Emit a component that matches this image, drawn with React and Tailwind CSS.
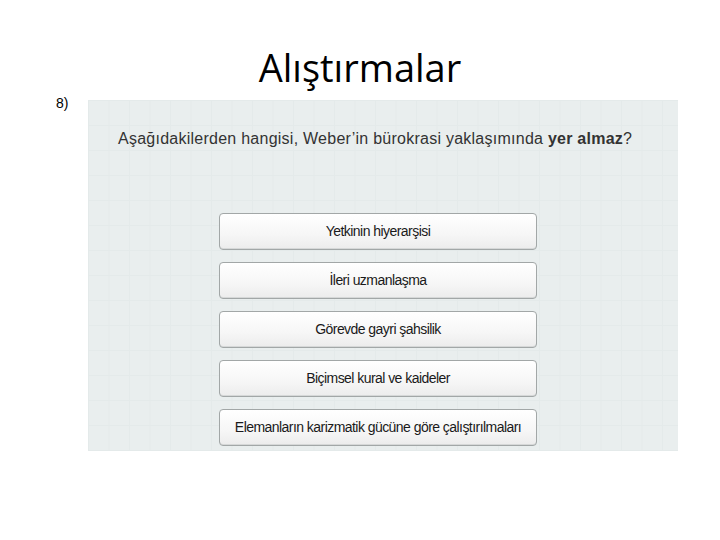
import React from 'react';

const options = [
  'Yetkinin hiyerarşisi',
  'İleri uzmanlaşma',
  'Görevde gayri şahsilik',
  'Biçimsel kural ve kaideler',
  'Elemanların karizmatik gücüne göre çalıştırılmaları',
];

export default function App() {
  return (
    <div className="w-[720px] h-[540px] bg-white relative overflow-hidden">
      <div className="h-[100px] relative">
        <h1 className="absolute left-0 right-0 top-[43px] text-center text-[38px] leading-[48px] text-black font-['Open_Sans',sans-serif]">
          Alıştırmalar
        </h1>
        <span className="absolute left-[56px] top-[95px] text-[14px] leading-[16px] text-black font-['Liberation_Sans',Arial,sans-serif]">
          8)
        </span>
      </div>

      {/* question panel */}
      <div className="ml-[88px] w-[590px] h-[351px] bg-[#e9eeee] bg-[linear-gradient(to_right,#e4eaea_1px,transparent_1px),linear-gradient(to_bottom,#e4eaea_1px,transparent_1px)] bg-[size:20.5px_25px] font-['Liberation_Sans',Arial,sans-serif]">
        <p className="pt-[30px] pl-[30px] text-[16px] leading-[18px] tracking-[0.25px] text-[#333]">
          Aşağıdakilerden hangisi, Weber’in bürokrasi yaklaşımında <b>yer almaz</b>?
        </p>
        <div className="mt-[65px] ml-[131px] w-[318px] flex flex-col gap-[12px]">
          {options.map((o) => (
            <div
              key={o}
              className="h-[37px] rounded-[4px] border border-[#a2a7a7] bg-[linear-gradient(to_bottom,#ffffff,#f6f6f6_60%,#ececec)] shadow-[inset_0_-1px_0_#d6d8d8] flex items-center justify-center text-[14px] text-[#1a1a1a] tracking-[-0.55px]"
            >
              {o}
            </div>
          ))}
        </div>
      </div>
    </div>
  );
}
